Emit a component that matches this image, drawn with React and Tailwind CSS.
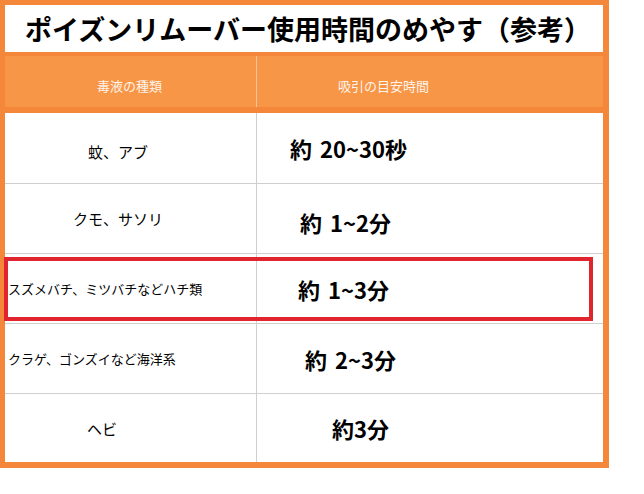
const rows = [
  { name: "蚊、アブ", time: "約 20~30秒", nameCls: "pl-[83px] text-[15px] pt-[6px]", timeCls: "pl-[33px]" },
  { name: "クモ、サソリ", time: "約 1~2分", nameCls: "pl-[68px] text-[15px]", timeCls: "pl-[43px] pt-[6px]" },
  { name: "スズメバチ、ミツバチなどハチ類", time: "約 1~3分", nameCls: "pl-[3px] text-[13px]", timeCls: "pl-[41px]" },
  { name: "クラゲ、ゴンズイなど海洋系", time: "約 2~3分", nameCls: "pl-[3px] text-[13px]", timeCls: "pl-[48px]" },
  { name: "ヘビ", time: "約3分", nameCls: "pl-[82px] text-[15px]", timeCls: "pl-[75px]" },
];

export default function App() {
  return (
    <div
      className="min-h-screen bg-white"
      style={{ fontFamily: '"Noto Sans CJK JP", "Noto Sans", sans-serif' }}
    >
      <div className="relative w-[609px] bg-[#f5873a] pt-[5px] pl-[5px] pr-[6px] pb-[6px]">
        {/* タイトル */}
        <div className="h-[47px] bg-white flex items-center justify-center pl-[8px] text-[27px] font-bold text-black leading-none">
          ポイズンリムーバー使用時間のめやす（参考）
        </div>

        {/* ヘッダー */}
        <div className="mt-[4px] h-[51px] bg-[#f79646] flex text-[13px] text-[#fff3ea] leading-none">
          <div className="w-[252px] border-r border-[#fbc39a] flex items-center pl-[92px] pt-[8px]">
            毒液の種類
          </div>
          <div className="flex-1 flex items-center pl-[81px] pt-[8px]">吸引の目安時間</div>
        </div>

        {/* 本体 */}
        <div className="mt-[6px] bg-white">
          {rows.map((r, i) => (
            <div
              key={i}
              className={
                i === 0
                  ? "flex h-[70px]"
                  : i === 4
                  ? "flex h-[69px] border-t border-[#cfcfcf]"
                  : "flex h-[70px] border-t border-[#cfcfcf]"
              }
            >
              <div className={"w-[252px] border-r border-[#cfcfcf] flex items-center leading-none text-black " + r.nameCls}>
                {r.name}
              </div>
              <div className={"flex-1 flex items-center leading-none font-bold text-[22px] text-black [word-spacing:3px] " + r.timeCls}>
                {r.time}
              </div>
            </div>
          ))}
        </div>

        {/* 赤枠 */}
        <div className="absolute left-[4px] top-[257px] w-[589px] h-[64px] border-4 border-[#e1252f]"></div>
      </div>
    </div>
  );
}
